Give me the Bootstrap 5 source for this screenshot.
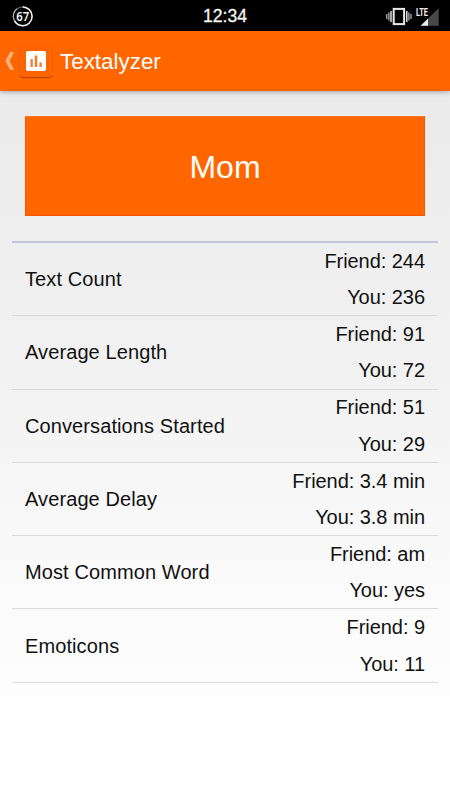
<!DOCTYPE html>
<html lang="en">
<head>
<meta charset="utf-8">
<meta name="viewport" content="width=device-width, initial-scale=1">
<title>Textalyzer</title>
<link href="https://cdn.jsdelivr.net/npm/bootstrap@5.3.0/dist/css/bootstrap.min.css" rel="stylesheet">
<style>
  body { font-family: "Liberation Sans", Arial, sans-serif; color: #111; height: 800px; overflow: hidden; background: #fff linear-gradient(#e8e8e8 0, #ededed 180px, #f2f2f2 380px, #f8f8f8 520px, #fff 740px) no-repeat; }
  .status-bar { height: 31px; background: #000; color: #f4f4f4; display: grid; grid-template-columns: 1fr auto 1fr; padding: 0 11px 0 12px; }
  .clock { font-size: 17.6px; line-height: 31px; padding-right: 1px; padding-top: 1px; -webkit-text-stroke: .3px #f4f4f4; }
  .app-bar { height: 60px; background: #f60; box-shadow: 0 1px 5px rgba(0,0,0,.3); padding-left: 5px; }
  .app-title { font-size: 22.4px; line-height: 58px; padding-top: 2px; margin-left: 8px; }
  .app-icon { width: 32px; height: 32px; margin-left: 5px; padding-right: 1px; background: #fc6404; border-radius: 3px; box-shadow: 0 1px 1px rgba(90,30,0,.5); }
  .hero { height: 100px; margin: 25px 25px 0; padding-top: 1px; background: #f60; border: 1px solid #ff5000; border-top-color: #ff7828; font-size: 32px; }
  .stats { margin: 25px 12px 0; border-top: 2px solid #c3c4d6; font-size: 20px; }
  .stat { height: 73.3px; padding: 0 13px; border-bottom: 1px solid #dadada; }
  .stat-label { letter-spacing: .1px; }
  .stat-values { line-height: 36.4px; letter-spacing: -.05px; }
</style>
<script src="https://cdn.jsdelivr.net/npm/bootstrap@5.3.0/dist/js/bootstrap.bundle.min.js"></script>
</head>
<body>
<div class="status-bar align-items-center">
  <svg width="22" height="22" viewBox="0 0 22 22">
    <circle cx="10.7" cy="11.3" r="9.4" fill="none" stroke="#555" stroke-width="1.3"/>
    <circle cx="10.7" cy="11.3" r="9.4" fill="none" stroke="#f4f4f4" stroke-width="1.5" stroke-dasharray="39.5 59.1" transform="rotate(-90 10.7 11.3)"/>
    <path d="M2 15A9.4 9.4 0 0 1 5 3.8" fill="none" stroke="#aaa" stroke-width="1.2"/>
    <text x="4.2" y="15.6" textLength="13" lengthAdjust="spacingAndGlyphs" font-family="Noto Sans, sans-serif" font-size="12.4" font-weight="600" fill="#f4f4f4">67</text>
  </svg>
  <div class="clock">12:34</div>
  <div class="d-flex justify-content-end">
    <svg width="54" height="31" viewBox="385 0 54 31">
      <rect x="393.7" y="7.9" width="10.4" height="15.2" fill="none" stroke="#e8e8e8" stroke-width="2"/>
      <path d="M391 10v11M406.8 10v11" stroke="#ddd" stroke-width="1.5"/>
      <path d="M386.8 13v5M411 13v5M388.9 11.5v8M408.9 11.5v8" stroke="#bbb" stroke-width="1.2"/>
      <path d="M438.7 7v17.8h-18z" fill="#484848"/>
      <path d="M428 17.6v7.2h-7.3z" fill="#eee"/>
      <text x="416" y="15" textLength="12" lengthAdjust="spacingAndGlyphs" font-family="Roboto, sans-serif" font-size="11.4" font-weight="700" fill="#eee">LTE</text>
    </svg>
  </div>
</div>
<header class="app-bar d-flex align-items-center text-white position-relative">
  <svg width="10" height="20" viewBox="0 0 10 20"><path d="M5.2 1H9L4.5 10 9 19H5.2L.4 10z" fill="#ffb27f"/></svg>
  <div class="app-icon d-flex align-items-center justify-content-center">
    <svg width="20" height="20" viewBox="0 0 20 20">
      <rect width="20" height="20" rx="2" fill="#fff"/>
      <path d="M4.5 8h2.3v8H4.500zM8.800 4.500h2.500V16H8.800zM13.400 11.500h2.300v4.500h-2.300z" fill="#f47a32"/>
    </svg>
  </div>
  <div class="app-title">Textalyzer</div>
</header>
<main>
  <div class="hero d-flex align-items-center justify-content-center text-white">Mom</div>
  <div class="stats">
    <div class="stat d-flex justify-content-between align-items-center"><div class="stat-label">Text Count</div><div class="stat-values text-end"><div>Friend: 244</div><div>You: 236</div></div></div>
    <div class="stat d-flex justify-content-between align-items-center"><div class="stat-label">Average Length</div><div class="stat-values text-end"><div>Friend: 91</div><div>You: 72</div></div></div>
    <div class="stat d-flex justify-content-between align-items-center"><div class="stat-label">Conversations Started</div><div class="stat-values text-end"><div>Friend: 51</div><div>You: 29</div></div></div>
    <div class="stat d-flex justify-content-between align-items-center"><div class="stat-label">Average Delay</div><div class="stat-values text-end"><div>Friend: 3.4 min</div><div>You: 3.8 min</div></div></div>
    <div class="stat d-flex justify-content-between align-items-center"><div class="stat-label">Most Common Word</div><div class="stat-values text-end"><div>Friend: am</div><div>You: yes</div></div></div>
    <div class="stat d-flex justify-content-between align-items-center"><div class="stat-label">Emoticons</div><div class="stat-values text-end"><div>Friend: 9</div><div>You: 11</div></div></div>
  </div>
</main>
</body>
</html>
